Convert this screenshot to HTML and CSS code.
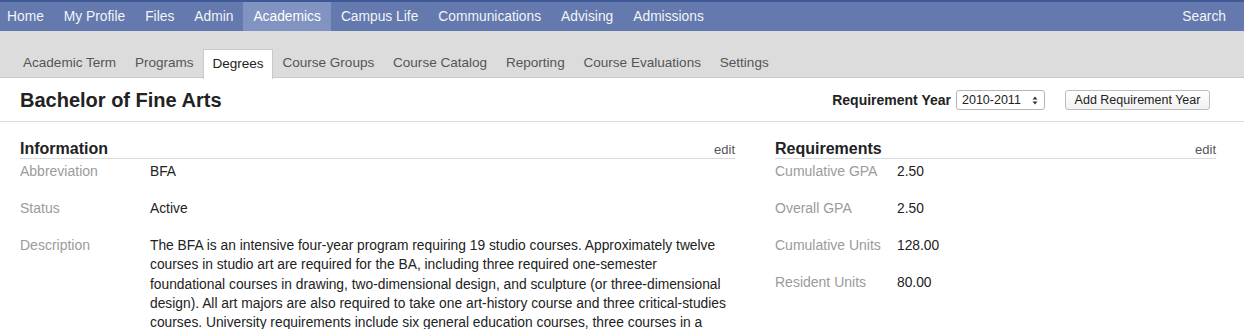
FILE: index.html
```html
<!DOCTYPE html>
<html>
<head>
<meta charset="utf-8">
<link rel="stylesheet" href="styles.css">
</head>
<body>
<header class="topnav">
  <ul class="topnav-list">
    <li class="topnav-item">Home</li>
    <li class="topnav-item">My Profile</li>
    <li class="topnav-item">Files</li>
    <li class="topnav-item">Admin</li>
    <li class="topnav-item is-active">Academics</li>
    <li class="topnav-item">Campus Life</li>
    <li class="topnav-item">Communications</li>
    <li class="topnav-item">Advising</li>
    <li class="topnav-item">Admissions</li>
  </ul>
  <div class="topnav-search">Search</div>
</header>
<nav class="subnav">
  <ul class="subnav-list">
    <li class="subnav-item">Academic Term</li>
    <li class="subnav-item">Programs</li>
    <li class="subnav-item is-active">Degrees</li>
    <li class="subnav-item">Course Groups</li>
    <li class="subnav-item">Course Catalog</li>
    <li class="subnav-item">Reporting</li>
    <li class="subnav-item">Course Evaluations</li>
    <li class="subnav-item">Settings</li>
  </ul>
</nav>
<div class="page-header">
  <h1 class="page-title">Bachelor of Fine Arts</h1>
  <div class="page-controls">
    <span class="control-label">Requirement Year</span>
    <div class="select">
      <span class="select-value">2010-2011</span>
      <svg class="select-arrows" width="6" height="9" viewBox="0 0 6 9"><path d="M3 0.5 L5.5 3.5 L0.5 3.5 Z M3 8.5 L5.5 5.5 L0.5 5.5 Z" fill="#333"/></svg>
    </div>
    <button class="btn">Add Requirement Year</button>
  </div>
</div>
<main class="content">
  <section class="panel panel-info">
    <div class="panel-head">
      <h2 class="panel-title">Information</h2>
      <span class="panel-edit">edit</span>
    </div>
    <dl class="fields fields-info">
      <dt>Abbreviation</dt><dd>BFA</dd>
      <dt>Status</dt><dd>Active</dd>
      <dt>Description</dt><dd>The BFA is an intensive four-year program requiring 19 studio courses. Approximately twelve courses in studio art are required for the BA, including three required one-semester foundational courses in drawing, two-dimensional design, and sculpture (or three-dimensional design). All art majors are also required to take one art-history course and three critical-studies courses. University requirements include six general education courses, three courses in a foreign language, and a senior thesis exhibition.</dd>
    </dl>
  </section>
  <section class="panel panel-req">
    <div class="panel-head">
      <h2 class="panel-title">Requirements</h2>
      <span class="panel-edit">edit</span>
    </div>
    <dl class="fields fields-req">
      <dt>Cumulative GPA</dt><dd>2.50</dd>
      <dt>Overall GPA</dt><dd>2.50</dd>
      <dt>Cumulative Units</dt><dd>128.00</dd>
      <dt>Resident Units</dt><dd>80.00</dd>
    </dl>
  </section>
</main>
</body>
</html>
```
FILE: styles.css
```css
* { box-sizing: border-box; }
html, body { margin: 0; padding: 0; }
body {
  font-family: "Liberation Sans", Arial, sans-serif;
  font-size: 14px;
  color: #222;
  background: #fff;
  overflow: hidden;
}
ul { list-style: none; margin: 0; padding: 0; }

.topnav {
  display: flex;
  justify-content: space-between;
  align-items: stretch;
  height: 31px;
  background: #6479ad;
  border-top: 2px solid #3f5896;
  color: #f2f4f8;
}
.topnav-list { display: flex; }
.topnav-item {
  display: flex;
  align-items: center;
  padding: 0 10px 1px;
  font-size: 13.8px;
}
.topnav-item:first-child { padding-left: 7px; }
.topnav-item.is-active { background: #8193c0; color: #fff; }
.topnav-search { display: flex; align-items: center; padding: 0 18px 1px 0; font-size: 13.8px; }

.subnav {
  background: #dcdcdc;
  border-bottom: 1px solid #c9c9c9;
  height: 47px;
  padding: 18px 0 0 13.6px;
}
.subnav-list { display: flex; height: 29px; }
.subnav-item {
  display: flex;
  align-items: center;
  padding: 0 8.4px 3px;
  font-size: 13.55px;
  color: #555;
  border: 1px solid transparent;
  border-bottom: 0;
}
.subnav-item.is-active {
  background: #fff;
  color: #222;
  border-color: #c9c9c9;
  height: 30px;
}

.page-header {
  display: flex;
  justify-content: space-between;
  align-items: center;
  height: 44px;
  padding: 1px 34px 0 20px;
  border-bottom: 1px solid #dcdcdc;
}
.page-title {
  margin: 0;
  font-size: 20px;
  font-weight: bold;
  color: #222;
}
.page-controls { display: flex; align-items: center; }
.control-label { font-weight: bold; font-size: 14px; margin-right: 5px; }
.select {
  display: flex;
  align-items: center;
  justify-content: space-between;
  width: 89px;
  height: 20px;
  padding: 0 6px 0 5px;
  border: 1px solid #b5b5b5;
  border-radius: 3px;
  background: #fff;
  font-size: 12.5px;
  margin-right: 20px;
}
.btn {
  height: 20px;
  width: 145px;
  padding: 0;
  font-family: inherit;
  font-size: 12.5px;
  color: #222;
  background: linear-gradient(#fff, #f1f1f1);
  border: 1px solid #bdbdbd;
  border-radius: 3px;
}

.content {
  display: grid;
  grid-template-columns: 715px 441px;
  column-gap: 40px;
  padding: 16px 28px 0 20px;
}
.panel-head {
  display: flex;
  justify-content: space-between;
  align-items: center;
  height: 21px;
  padding-top: 2px;
  border-bottom: 1px solid #dcdcdc;
}
.panel-title { margin: 0; font-size: 16px; font-weight: bold; color: #222; }
.panel-edit { font-size: 13px; color: #555; }

.fields {
  display: grid;
  margin: 3px 0 0;
  row-gap: 17.75px;
  line-height: 19.3px;
}
.fields-info { grid-template-columns: 130px 1fr; }
.fields-req { grid-template-columns: 122px 1fr; }
.fields dt { color: #9b9b9b; }
.fields dd { margin: 0; color: #222; font-size: 13.8px; }
```
